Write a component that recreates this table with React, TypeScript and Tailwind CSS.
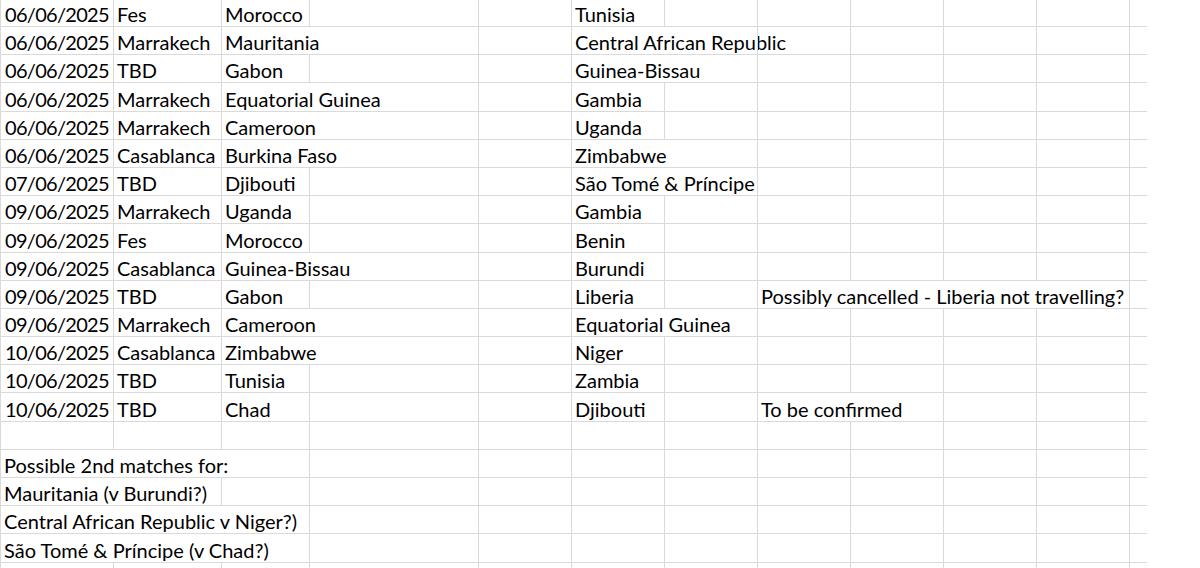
const COLS = [114, 108, 88, 169, 93, 93, 93, 93, 93, 93, 93, 17];

type Row = { cells: Record<number, string>; hide?: number[]; date?: boolean };

const rows: Row[] = [
  { cells: { 0: '06/06/2025', 1: 'Fes', 2: 'Morocco', 5: 'Tunisia' } },
  { cells: { 0: '06/06/2025', 1: 'Marrakech', 2: 'Mauritania', 5: 'Central African Republic' }, hide: [2, 5] },
  { cells: { 0: '06/06/2025', 1: 'TBD', 2: 'Gabon', 5: 'Guinea-Bissau' }, hide: [5] },
  { cells: { 0: '06/06/2025', 1: 'Marrakech', 2: 'Equatorial Guinea', 5: 'Gambia' }, hide: [2] },
  { cells: { 0: '06/06/2025', 1: 'Marrakech', 2: 'Cameroon', 5: 'Uganda' }, hide: [2] },
  { cells: { 0: '06/06/2025', 1: 'Casablanca', 2: 'Burkina Faso', 5: 'Zimbabwe' }, hide: [2, 5] },
  { cells: { 0: '07/06/2025', 1: 'TBD', 2: 'Djibouti', 5: 'São Tomé & Príncipe' }, hide: [5] },
  { cells: { 0: '09/06/2025', 1: 'Marrakech', 2: 'Uganda', 5: 'Gambia' } },
  { cells: { 0: '09/06/2025', 1: 'Fes', 2: 'Morocco', 5: 'Benin' } },
  { cells: { 0: '09/06/2025', 1: 'Casablanca', 2: 'Guinea-Bissau', 5: 'Burundi' }, hide: [2] },
  {
    cells: { 0: '09/06/2025', 1: 'TBD', 2: 'Gabon', 5: 'Liberia', 7: 'Possibly cancelled - Liberia not travelling?' },
    hide: [7, 8, 9],
  },
  { cells: { 0: '09/06/2025', 1: 'Marrakech', 2: 'Cameroon', 5: 'Equatorial Guinea' }, hide: [2, 5] },
  { cells: { 0: '10/06/2025', 1: 'Casablanca', 2: 'Zimbabwe', 5: 'Niger' }, hide: [2] },
  { cells: { 0: '10/06/2025', 1: 'TBD', 2: 'Tunisia', 5: 'Zambia' } },
  { cells: { 0: '10/06/2025', 1: 'TBD', 2: 'Chad', 5: 'Djibouti', 7: 'To be confirmed' }, hide: [7] },
  { cells: {} },
  { cells: { 0: 'Possible 2nd matches for:' }, hide: [0, 1] },
  { cells: { 0: 'Mauritania (v Burundi?)' }, hide: [0] },
  { cells: { 0: 'Central African Republic v Niger?)' }, hide: [0, 1] },
  { cells: { 0: 'São Tomé & Príncipe (v Chad?)' }, hide: [0, 1] },
  { cells: {} },
];

const isDate = (s?: string) => !!s && /^\d\d\/\d\d\/\d{4}$/.test(s);

function SheetRow({ row, first }: { row: Row; first: boolean }) {
  const hide = row.hide || [];
  return (
    <div className={`flex ${first ? 'h-[28px]' : 'h-[28.19px]'}`}>
      {COLS.map((w, i) => {
        const last = i === COLS.length - 1;
        const right = !last && !hide.includes(i);
        const text = row.cells[i];
        return (
          <div
            key={i}
            style={{ width: w, minWidth: w }}
            className={`flex items-end border-b border-[#dadada] pb-0 whitespace-nowrap overflow-visible leading-[24px] ${
              i === 0 ? 'border-l' : ''
            } ${right ? 'border-r' : ''} ${isDate(text) ? 'pl-[4px] tracking-[-0.7px]' : 'pl-[3px]'}`}
          >
            {text ?? ''}
          </div>
        );
      })}
    </div>
  );
}

export default function App() {
  return (
    <div
      className="w-[1200px] h-[568px] overflow-hidden bg-white text-black text-[20px]"
      style={{ fontFamily: 'Lato, "Open Sans", sans-serif' }}
    >
      <div className="-mt-[1px]">
        {rows.map((r, i) => (
          <SheetRow key={i} row={r} first={i === 0} />
        ))}
      </div>
    </div>
  );
}
